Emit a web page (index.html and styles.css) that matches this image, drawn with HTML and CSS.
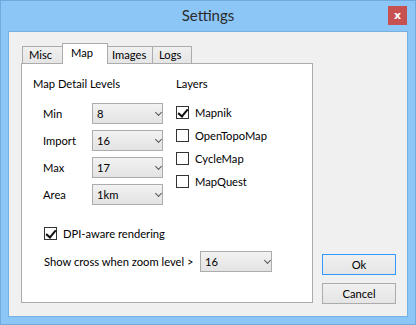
FILE: index.html
```html
<!DOCTYPE html>
<html>
<head>
    <title>Settings</title>
    <link rel="stylesheet" href="styles.css">
</head>
<body>
    <div class="window">
        <div class="titlebar">
            <span class="title">Settings</span>
            <button class="close">x</button>
        </div>

        <div class="client">
            <div class="tabs">
                <div class="tab-strip">
                    <div class="tab tab-misc">Misc</div>
                    <div class="tab tab-map active">Map</div>
                    <div class="tab tab-images">Images</div>
                    <div class="tab tab-logs">Logs</div>
                </div>

                <div class="panel">
                    <div class="columns">
                        <div class="levels">
                            <div class="group-title">Map Detail Levels</div>
                            <div class="field">
                                <span class="field-label">Min</span>
                                <div class="combo"><span>8</span></div>
                            </div>
                            <div class="field">
                                <span class="field-label">Import</span>
                                <div class="combo"><span>16</span></div>
                            </div>
                            <div class="field">
                                <span class="field-label">Max</span>
                                <div class="combo"><span>17</span></div>
                            </div>
                            <div class="field">
                                <span class="field-label">Area</span>
                                <div class="combo"><span>1km</span></div>
                            </div>
                        </div>

                        <div class="layers">
                            <div class="group-title">Layers</div>
                            <label class="check-row"><span class="box checked"></span>Mapnik</label>
                            <label class="check-row"><span class="box"></span>OpenTopoMap</label>
                            <label class="check-row"><span class="box"></span>CycleMap</label>
                            <label class="check-row"><span class="box"></span>MapQuest</label>
                        </div>
                    </div>

                    <label class="check-row dpi"><span class="box checked"></span>DPI-aware rendering</label>

                    <div class="cross-row">
                        <span class="cross-label">Show cross when zoom level &gt;</span>
                        <div class="combo combo-wide"><span>16</span></div>
                    </div>
                </div>
            </div>

            <div class="buttons">
                <button class="button default">Ok</button>
                <button class="button">Cancel</button>
            </div>
        </div>
    </div>
</body>
</html>
```

FILE: styles.css
```css
:root {
    --frame: #8cc6f7;
    --frame-edge: #6fa9dd;
    --face: #f0f0f0;
    --line: #acacac;
    --text: #000000;
}

* {
    margin: 0;
    padding: 0;
    box-sizing: border-box;
}

body {
    font-family: 'Lato', 'Liberation Sans', sans-serif;
    font-size: 11.2px;
    color: var(--text);
    background: var(--frame);
}

.window {
    width: 416px;
    height: 325px;
    background: var(--frame);
    border: 1px solid var(--frame-edge);
    display: flex;
    flex-direction: column;
}

.titlebar {
    height: 30px;
    display: flex;
    align-items: center;
    justify-content: center;
    position: relative;
}

.title {
    font-size: 15px;
    color: #2b2b2b;
    margin-top: -2px;
}

.close {
    position: absolute;
    top: 5px;
    right: 8px;
    width: 19px;
    height: 19px;
    border: none;
    background: #c75050;
    color: #ffffff;
    font-family: 'DejaVu Sans', sans-serif;
    font-size: 11px;
    font-weight: bold;
    line-height: 17px;
}

.client {
    margin: 0 7px 7px 7px;
    height: 286px;
    background: var(--face);
    border: 1px solid #76afe2;
    display: flex;
    padding: 11px 0 0 12px;
}

.tabs {
    width: 292px;
    height: 260px;
    display: flex;
    flex-direction: column;
}

.tab-strip {
    height: 20px;
    display: flex;
    align-items: flex-end;
    padding-left: 1px;
    position: relative;
    z-index: 1;
}

.tab {
    height: 17px;
    border: 1px solid var(--line);
    border-bottom: none;
    background: linear-gradient(#f0f0f0, #e5e5e5);
    line-height: 16px;
    padding-left: 6px;
    margin-left: -1px;
    white-space: nowrap;
}

.tab:first-child {
    margin-left: 0;
}

.tab-misc { width: 41px; }
.tab-images { width: 46px; padding-left: 4px; }
.tab-logs { width: 40px; padding-left: 6px; }

.tab.active {
    width: 46px;
    height: 21px;
    margin-bottom: -1px;
    background: #ffffff;
    line-height: 18px;
    padding-left: 8px;
    position: relative;
    z-index: 2;
}

.tab.active + .tab {
    margin-left: -1px;
}

.panel {
    flex: 1;
    background: #ffffff;
    border: 1px solid var(--line);
    padding: 12px 0 0 11px;
}

.columns {
    display: flex;
}

.levels {
    width: 143px;
}

.group-title {
    height: 16px;
    line-height: 16px;
    margin-bottom: 11px;
}

.field {
    display: flex;
    align-items: center;
    height: 20px;
    margin-bottom: 7px;
    padding-left: 10px;
}

.field-label {
    width: 49px;
}

.combo {
    width: 71px;
    height: 21px;
    border: 1px solid var(--line);
    background: linear-gradient(#f2f2f2, #e3e3e3);
    display: flex;
    align-items: center;
    padding-left: 4px;
    position: relative;
}

.combo::after {
    content: '';
    position: absolute;
    right: 1px;
    top: 6px;
    width: 4px;
    height: 4px;
    border-right: 1.5px solid #555555;
    border-bottom: 1.5px solid #555555;
    transform: rotate(45deg);
}

.layers {
    display: flex;
    flex-direction: column;
}

.layers .group-title {
    margin-bottom: 9px;
}

.check-row {
    display: flex;
    align-items: center;
    height: 23px;
    gap: 6px;
}

.box {
    width: 13px;
    height: 13px;
    border: 1px solid #333333;
    background: #ffffff;
    position: relative;
}

.box.checked::after {
    content: '';
    position: absolute;
    left: 3px;
    top: 0px;
    width: 4px;
    height: 8px;
    border-right: 2px solid #111111;
    border-bottom: 2px solid #111111;
    transform: rotate(40deg);
}

.dpi {
    margin: 11px 0 0 11px;
}

.cross-row {
    display: flex;
    align-items: center;
    margin: 6px 0 0 11px;
    gap: 10px;
}

.cross-label {
    width: 146px;
    flex-shrink: 0;
    white-space: nowrap;
}

.combo-wide {
    width: 72px;
}

.buttons {
    display: flex;
    flex-direction: column;
    gap: 8px;
    margin: 211px 0 0 9px;
}

.button {
    width: 74px;
    height: 21px;
    border: 1px solid var(--line);
    background: linear-gradient(#f0f0f0, #e5e5e5);
    font-family: 'Lato', 'Liberation Sans', sans-serif;
    font-size: 11.2px;
    color: var(--text);
}

.button.default {
    border-color: #3399ff;
}
```
